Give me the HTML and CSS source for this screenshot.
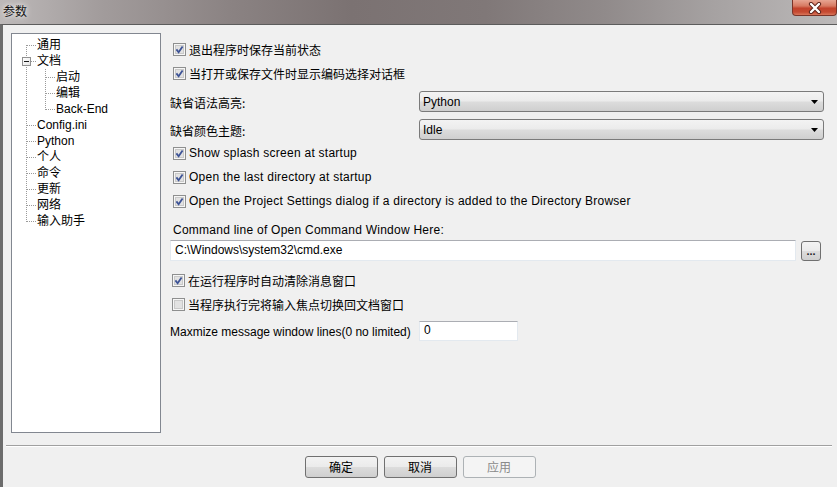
FILE: index.html
```html
<!DOCTYPE html>
<html lang="zh">
<head>
<meta charset="utf-8">
<title>参数</title>
<link rel="stylesheet" href="styles.css">
</head>
<body>
<div class="window">
  <div class="titlebar">
    <div class="title">参数</div>
    <div class="close">
      <svg width="16" height="12" viewBox="0 0 16 12"><path d="M4 2 L12 10 M12 2 L4 10" stroke="#5a2018" stroke-width="4.2" stroke-linecap="round"/><path d="M4 2 L12 10 M12 2 L4 10" stroke="#ffffff" stroke-width="2.4" stroke-linecap="round"/></svg>
    </div>
  </div>
  <div class="client">
    <div class="main">
      <div class="tree">
        <div class="node first"><span class="g"></span><span class="lbl">通用</span></div>
        <div class="node"><span class="g"><span class="box"></span></span><span class="lbl">文档</span></div>
        <div class="node sub"><span class="g"></span><span class="lbl">启动</span></div>
        <div class="node sub"><span class="g"></span><span class="lbl">编辑</span></div>
        <div class="node sub lastsub"><span class="g"></span><span class="lbl">Back-End</span></div>
        <div class="node"><span class="g"></span><span class="lbl">Config.ini</span></div>
        <div class="node"><span class="g"></span><span class="lbl">Python</span></div>
        <div class="node"><span class="g"></span><span class="lbl">个人</span></div>
        <div class="node"><span class="g"></span><span class="lbl">命令</span></div>
        <div class="node"><span class="g"></span><span class="lbl">更新</span></div>
        <div class="node"><span class="g"></span><span class="lbl">网络</span></div>
        <div class="node last"><span class="g"></span><span class="lbl">输入助手</span></div>
      </div>
      <div class="panel">
        <label class="check">
          <svg class="cb" width="13" height="13" viewBox="0 0 13 13"><rect x="0.5" y="0.5" width="12" height="12" fill="#f6f6f6" stroke="#8e8f8f"/><rect x="2.5" y="2.5" width="8" height="8" fill="#e2e2e2" stroke="#c9c9c9"/><path d="M3.4 6.4 L5.6 9.2 L9.6 3.4" fill="none" stroke="#3d5396" stroke-width="1.8"/></svg>
          <span class="cjk">退出程序时保存当前状态</span>
        </label>
        <label class="check">
          <svg class="cb" width="13" height="13" viewBox="0 0 13 13"><rect x="0.5" y="0.5" width="12" height="12" fill="#f6f6f6" stroke="#8e8f8f"/><rect x="2.5" y="2.5" width="8" height="8" fill="#e2e2e2" stroke="#c9c9c9"/><path d="M3.4 6.4 L5.6 9.2 L9.6 3.4" fill="none" stroke="#3d5396" stroke-width="1.8"/></svg>
          <span class="cjk">当打开或保存文件时显示编码选择对话框</span>
        </label>
        <div class="field f1">
          <span class="flabel cjk">缺省语法高亮:</span>
          <div class="combo"><span>Python</span><svg width="7" height="4" viewBox="0 0 7 4"><path d="M0 0 H7 L3.5 4 Z" fill="#000"/></svg></div>
        </div>
        <div class="field f2">
          <span class="flabel cjk">缺省颜色主题:</span>
          <div class="combo"><span>Idle</span><svg width="7" height="4" viewBox="0 0 7 4"><path d="M0 0 H7 L3.5 4 Z" fill="#000"/></svg></div>
        </div>
        <label class="check c3">
          <svg class="cb" width="13" height="13" viewBox="0 0 13 13"><rect x="0.5" y="0.5" width="12" height="12" fill="#f6f6f6" stroke="#8e8f8f"/><rect x="2.5" y="2.5" width="8" height="8" fill="#e2e2e2" stroke="#c9c9c9"/><path d="M3.4 6.4 L5.6 9.2 L9.6 3.4" fill="none" stroke="#3d5396" stroke-width="1.8"/></svg>
          <span class="latin">Show splash screen at startup</span>
        </label>
        <label class="check">
          <svg class="cb" width="13" height="13" viewBox="0 0 13 13"><rect x="0.5" y="0.5" width="12" height="12" fill="#f6f6f6" stroke="#8e8f8f"/><rect x="2.5" y="2.5" width="8" height="8" fill="#e2e2e2" stroke="#c9c9c9"/><path d="M3.4 6.4 L5.6 9.2 L9.6 3.4" fill="none" stroke="#3d5396" stroke-width="1.8"/></svg>
          <span class="latin">Open the last directory at startup</span>
        </label>
        <label class="check">
          <svg class="cb" width="13" height="13" viewBox="0 0 13 13"><rect x="0.5" y="0.5" width="12" height="12" fill="#f6f6f6" stroke="#8e8f8f"/><rect x="2.5" y="2.5" width="8" height="8" fill="#e2e2e2" stroke="#c9c9c9"/><path d="M3.4 6.4 L5.6 9.2 L9.6 3.4" fill="none" stroke="#3d5396" stroke-width="1.8"/></svg>
          <span class="latin">Open the Project Settings dialog if a directory is added to the Directory Browser</span>
        </label>
        <div class="cmdlabel latin">Command line of Open Command Window Here:</div>
        <div class="cmdrow">
          <div class="textbox">C:\Windows\system32\cmd.exe</div>
          <div class="browse">...</div>
        </div>
        <label class="check c4">
          <svg class="cb" width="13" height="13" viewBox="0 0 13 13"><rect x="0.5" y="0.5" width="12" height="12" fill="#f6f6f6" stroke="#8e8f8f"/><rect x="2.5" y="2.5" width="8" height="8" fill="#e2e2e2" stroke="#c9c9c9"/><path d="M3.4 6.4 L5.6 9.2 L9.6 3.4" fill="none" stroke="#3d5396" stroke-width="1.8"/></svg>
          <span class="cjk">在运行程序时自动清除消息窗口</span>
        </label>
        <label class="check c5">
          <svg class="cb" width="13" height="13" viewBox="0 0 13 13"><rect x="0.5" y="0.5" width="12" height="12" fill="#f6f6f6" stroke="#8e8f8f"/><rect x="2.5" y="2.5" width="8" height="8" fill="#e2e2e2" stroke="#c9c9c9"/></svg>
          <span class="cjk">当程序执行完将输入焦点切换回文档窗口</span>
        </label>
        <div class="maxrow">
          <span class="flabel">Maxmize message window lines(0 no limited)</span>
          <div class="numbox">0</div>
        </div>
      </div>
    </div>
    <div class="sep"></div>
    <div class="buttons">
      <div class="btn">确定</div>
      <div class="btn">取消</div>
      <div class="btn disabled">应用</div>
    </div>
  </div>
</div>
</body>
</html>
```

FILE: styles.css
```css
html, body {
  margin: 0;
  padding: 0;
}
body {
  width: 837px;
  height: 487px;
  overflow: hidden;
  font-family: "Liberation Sans", "Noto Sans CJK SC", sans-serif;
  font-size: 12px;
  color: #000;
}
.window {
  display: flex;
  flex-direction: column;
  height: 487px;
}
.titlebar {
  height: 24px;
  flex: none;
  display: flex;
  justify-content: space-between;
  align-items: flex-start;
  background: linear-gradient(to right, #bdb9b9 0%, #a29c9c 12%, #8a8282 28%, #7b7272 42%, #807878 58%, #908a8a 72%, #a7a3a3 86%, #bcb9b9 100%);
}
.title {
  padding: 3px 0 0 3px;
  line-height: 16px;
  font-family: "Noto Sans CJK SC", sans-serif;
  font-size: 12px;
  color: #111;
  text-shadow: 0 0 4px rgba(255,255,255,0.9), 0 0 8px rgba(255,255,255,0.6);
}
.close {
  width: 45px;
  height: 16px;
  margin-right: 0;
  box-sizing: border-box;
  border: 1px solid #7a3428;
  border-top: none;
  border-radius: 0 0 4px 4px;
  background: linear-gradient(#e7a592 0%, #d77a62 40%, #c2432c 55%, #c54a32 80%, #d9765a 100%);
  display: flex;
  align-items: center;
  justify-content: center;
}
.client {
  flex: 1;
  display: flex;
  flex-direction: column;
  background: #f0f0f0;
  border-top: 1px solid #5c5c5c;
  border-left: 3px solid #6c6c6c;
}
.main {
  display: flex;
  padding: 8px 0 0 8px;
}
.tree {
  width: 150px;
  height: 400px;
  box-sizing: border-box;
  border: 1px solid #828790;
  background: #fff;
  padding-top: 3px;
  flex: none;
}
.node {
  display: flex;
  align-items: center;
  height: 16px;
  line-height: 16px;
  font-family: "Liberation Sans", "Noto Sans CJK SC", sans-serif;
  font-size: 12px;
  white-space: nowrap;
}
.g {
  width: 25px;
  height: 16px;
  flex: none;
  display: flex;
  align-items: center;
  background-image:
    repeating-linear-gradient(to bottom, #9a9a9a 0 1px, transparent 1px 2px),
    repeating-linear-gradient(to right, #9a9a9a 0 1px, transparent 1px 2px);
  background-repeat: no-repeat;
  background-size: 1px 16px, 9px 1px;
  background-position: 14px 0, 15px 8px;
}
.node.first .g {
  background-size: 1px 8px, 9px 1px;
  background-position: 14px 8px, 15px 8px;
}
.node.last .g {
  background-size: 1px 9px, 9px 1px;
  background-position: 14px 0, 15px 8px;
}
.node.sub .g {
  width: 44px;
  background-image:
    repeating-linear-gradient(to bottom, #9a9a9a 0 1px, transparent 1px 2px),
    repeating-linear-gradient(to bottom, #9a9a9a 0 1px, transparent 1px 2px),
    repeating-linear-gradient(to right, #9a9a9a 0 1px, transparent 1px 2px);
  background-size: 1px 16px, 1px 16px, 9px 1px;
  background-position: 14px 0, 33px 0, 34px 8px;
}
.node.sub.lastsub .g {
  background-size: 1px 16px, 1px 9px, 9px 1px;
}
.box {
  width: 9px;
  height: 9px;
  box-sizing: border-box;
  margin-left: 10px;
  border: 1px solid #919191;
  background: linear-gradient(to bottom right, #ffffff, #e6e6e6);
  display: flex;
  align-items: center;
  justify-content: center;
}
.box::after {
  content: "";
  width: 5px;
  height: 1px;
  background: #1a1a1a;
}
.panel {
  flex: 1;
  margin-left: 9px;
  padding: 4px 13px 0 0;
  display: flex;
  flex-direction: column;
}
.cjk {
  font-family: "Noto Sans CJK SC", sans-serif;
  font-size: 12px;
}
.latin {
  letter-spacing: 0.25px;
}
.check {
  display: flex;
  align-items: center;
  gap: 3px;
  height: 24px;
  padding-left: 3px;
  white-space: nowrap;
}
.cb {
  flex: none;
  display: block;
}
.check.c3 { margin-top: 1px; }
.check.c4 { margin-top: 7px; padding-left: 2px; }
.check.c5 { padding-left: 2px; }
.field {
  display: flex;
  align-items: center;
  height: 21px;
}
.field.f1 { margin-top: 6px; }
.field.f2 { margin-top: 7px; }
.flabel {
  width: 249px;
  flex: none;
  padding-top: 2px;
  white-space: nowrap;
}
.combo {
  flex: 1;
  height: 21px;
  box-sizing: border-box;
  border: 1px solid #7a7a7a;
  border-radius: 3px;
  background: linear-gradient(#f3f3f3 0%, #ebebeb 48%, #dcdcdc 52%, #cfcfcf 100%);
  display: flex;
  align-items: center;
  justify-content: space-between;
  padding: 0 5px 0 3px;
}
.cmdlabel {
  margin-top: 10px;
  padding-left: 3px;
  line-height: 14px;
  white-space: nowrap;
}
.cmdrow {
  margin-top: 3px;
  display: flex;
  align-items: center;
  gap: 5px;
  padding-right: 3px;
}
.textbox {
  flex: 1;
  height: 21px;
  box-sizing: border-box;
  background: #fff;
  border: 1px solid #e3e9ef;
  border-top-color: #abadb3;
  padding: 0 4px;
  line-height: 19px;
}
.browse {
  width: 20px;
  height: 20px;
  box-sizing: border-box;
  border: 1px solid #707070;
  border-radius: 3px;
  background: linear-gradient(#f3f3f3 0%, #ebebeb 48%, #dcdcdc 52%, #cfcfcf 100%);
  font-size: 11px;
  line-height: 18px;
  text-align: center;
  font-weight: bold;
  color: #222;
}
.maxrow {
  margin-top: 5px;
  display: flex;
  align-items: center;
}
.numbox {
  width: 99px;
  height: 20px;
  box-sizing: border-box;
  background: #fff;
  border: 1px solid #e3e9ef;
  border-top-color: #abadb3;
  padding: 0 4px;
  line-height: 16px;
}
.sep {
  margin: 12px 5px 0 3px;
  border-top: 1px solid #a0a0a0;
  border-bottom: 1px solid #fff;
}
.buttons {
  display: flex;
  justify-content: center;
  gap: 6px;
  margin-top: 9px;
}
.btn {
  width: 73px;
  height: 22px;
  box-sizing: border-box;
  border: 1px solid #707070;
  border-radius: 3px;
  background: linear-gradient(#f3f3f3 0%, #ebebeb 48%, #dcdcdc 52%, #cfcfcf 100%);
  font-family: "Noto Sans CJK SC", sans-serif;
  font-size: 12px;
  line-height: 20px;
  text-align: center;
}
.btn.disabled {
  border-color: #adb2b5;
  background: #f4f4f4;
  color: #8a8a8a;
}
```
